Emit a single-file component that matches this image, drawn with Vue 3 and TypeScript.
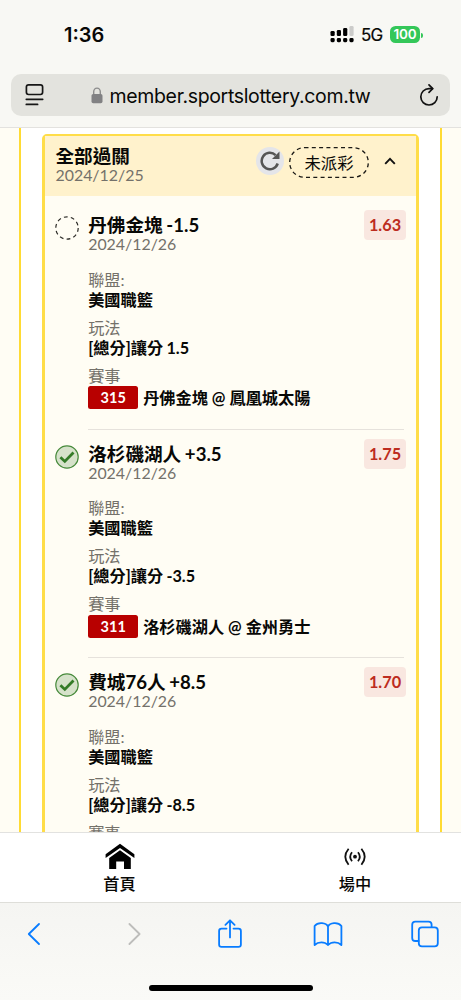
<script setup lang="ts">
interface Leg {
  pick: string
  date: string
  odds: string
  league: string
  play: string
  code: string
  match: string
  won: boolean
}

const legs: Leg[] = [
  { pick: '丹佛金塊 -1.5', date: '2024/12/26', odds: '1.63', league: '美國職籃', play: '[總分]讓分 1.5', code: '315', match: '丹佛金塊 @ 鳳凰城太陽', won: false },
  { pick: '洛杉磯湖人 +3.5', date: '2024/12/26', odds: '1.75', league: '美國職籃', play: '[總分]讓分 -3.5', code: '311', match: '洛杉磯湖人 @ 金州勇士', won: true },
  { pick: '費城76人 +8.5', date: '2024/12/26', odds: '1.70', league: '美國職籃', play: '[總分]讓分 -8.5', code: '', match: '', won: true },
]
</script>

<template>
  <div class="screen">
    <header class="browser">
      <div class="status">
        <span class="time">1:36</span>
        <div class="status-right">
          <svg class="signal" width="24" height="17" viewBox="0 0 24 17">
            <rect x="0.5" y="5" width="4.2" height="5" rx="1.3" />
            <rect x="6.8" y="4" width="4.2" height="6" rx="1.3" />
            <rect x="13.1" y="2" width="4.2" height="8" rx="1.3" />
            <rect x="19.4" y="0" width="4.2" height="10" rx="1.3" fill="#ccccca" />
            <rect x="0.5" y="12" width="4.2" height="4.2" rx="1.4" />
            <rect x="6.8" y="12" width="4.2" height="4.2" rx="1.4" />
            <rect x="13.1" y="12" width="4.2" height="4.2" rx="1.4" />
            <rect x="19.4" y="12" width="4.2" height="4.2" rx="1.4" />
          </svg>
          <span class="net">5G</span>
          <span class="battery">100</span>
          <span class="nub"></span>
        </div>
      </div>
      <div class="address">
        <svg class="reader" width="20" height="24" viewBox="0 0 20 24" fill="none" stroke="#161616" stroke-width="1.7" stroke-linecap="round">
          <rect x="1.4" y="1.9" width="16.2" height="9.6" rx="2.2" />
          <path d="M1.3 16.3H17.7M1.3 21.4H12.6" />
        </svg>
        <div class="url">
          <svg width="12" height="17" viewBox="0 0 12 17">
            <path d="M2.7 8V4.8a3.3 3.7 0 0 1 6.6 0V8" fill="none" stroke="#8c8c8c" stroke-width="1.4" />
            <rect x="0.5" y="7" width="11" height="9.2" rx="1.7" fill="#818183" />
          </svg>
          <span>member.sportslottery.com.tw</span>
        </div>
        <svg class="reload" width="20" height="23" viewBox="0 0 20 23" fill="none" stroke="#111" stroke-width="1.7" stroke-linecap="round" stroke-linejoin="round">
          <path d="M13.5 4.6H10A8.2 8.2 0 1 0 18.2 12.8" />
          <path d="M10 0.9L13.7 4.6L10 8.3" />
        </svg>
      </div>
    </header>

    <main class="content">
      <div class="panel">
        <section class="ticket">
          <div class="ticket-head">
            <div class="head-text">
              <div class="title">全部過關</div>
              <div class="date">2024/12/25</div>
            </div>
            <div class="refresh">
              <svg width="20" height="20" viewBox="0 0 20 20">
                <path d="M15.6 4.1A8.2 8.2 0 1 0 17.7 12.5" fill="none" stroke="#555" stroke-width="2.5" />
                <path d="M19.5 0.6V8.1H12z" fill="#555" />
              </svg>
            </div>
            <div class="pill">
              <svg width="80" height="31" viewBox="0 0 80 31">
                <rect x="0.7" y="0.7" width="78.6" height="29.6" rx="14.8" fill="none" stroke="#1b1a16" stroke-width="1.3" stroke-dasharray="4 3.3" />
              </svg>
              <span>未派彩</span>
            </div>
            <svg class="chevron" width="12" height="8" viewBox="0 0 12 8">
              <path d="M1.2 6.8L6 1.8L10.8 6.8" fill="none" stroke="#111" stroke-width="1.9" />
            </svg>
          </div>

          <div class="legs">
            <article v-for="leg in legs" :key="leg.pick" class="leg">
              <div class="mark">
                <svg v-if="leg.won" width="24" height="24" viewBox="0 0 24 24">
                  <circle cx="12" cy="12" r="11.2" fill="#d6e2ca" stroke="#478a3b" stroke-width="1.2" />
                  <path d="M5.4 12.3L9.8 16.4L18.5 7.6" fill="none" stroke="#347b27" stroke-width="2.8" />
                </svg>
                <svg v-else width="24" height="24" viewBox="0 0 24 24">
                  <circle cx="12" cy="12" r="11.2" fill="none" stroke="#2b2a26" stroke-width="1.2" stroke-dasharray="3.8 3.24" />
                </svg>
              </div>
              <div class="body">
                <div class="title">{{ leg.pick }}</div>
                <div class="date">{{ leg.date }}</div>
                <div class="field first">
                  <div class="label">聯盟:</div>
                  <div class="value">{{ leg.league }}</div>
                </div>
                <div class="field">
                  <div class="label">玩法</div>
                  <div class="value">{{ leg.play }}</div>
                </div>
                <div class="field">
                  <div class="label">賽事</div>
                  <div v-if="leg.code" class="value match">
                    <span class="code">{{ leg.code }}</span>
                    <span>{{ leg.match }}</span>
                  </div>
                </div>
              </div>
              <span class="odds">{{ leg.odds }}</span>
            </article>
          </div>
        </section>
      </div>
    </main>

    <nav class="tabs">
      <div class="tab">
        <svg width="30" height="28" viewBox="0 0 30 28">
          <path d="M15 0.7L29.4 11.2V15L15 4.9L0.6 15V11.2z" />
          <path d="M15 7.3L25.8 15V26H19V18.5H11.2V26H4.2V15z" />
        </svg>
        <span>首頁</span>
      </div>
      <div class="tab">
        <svg width="24" height="28" viewBox="0 0 24 28" fill="none" stroke="#111" stroke-width="1.8">
          <circle cx="12" cy="13.7" r="1.9" fill="#111" stroke="none" />
          <path d="M9 9.2Q5.4 13.7 9 18.2M15 9.2Q18.6 13.7 15 18.2" />
          <path d="M5.6 5.7Q-1 13.7 5.6 21.8M18.4 5.7Q25 13.7 18.4 21.8" />
        </svg>
        <span>場中</span>
      </div>
    </nav>

    <footer class="toolbar">
      <div class="tools">
        <svg width="28" height="30" viewBox="0 0 28 30"><path d="M19 5L8.8 15L19 25" /></svg>
        <svg class="off" width="28" height="30" viewBox="0 0 28 30"><path d="M9.4 5L19.6 15L9.4 25" /></svg>
        <svg width="28" height="30" viewBox="0 0 28 30">
          <path d="M10.5 9.6H5.5Q3.1 9.6 3.1 12V25.4Q3.1 27.8 5.5 27.8H22.5Q24.9 27.8 24.9 25.4V12Q24.9 9.6 22.5 9.6H17.5" />
          <path d="M14 18.4V1.3M9.4 5.8L14 1.3L18.6 5.8" />
        </svg>
        <svg width="30" height="30" viewBox="0 0 30 30">
          <path d="M15 26V7.5C13.2 3.7 5.1 2.6 1.6 7V26C5.2 22.4 11.6 22.4 15 26C18.4 22.4 24.8 22.4 28.4 26V7C24.9 2.6 16.8 3.7 15 7.5" />
        </svg>
        <svg width="28" height="30" viewBox="0 0 28 30">
          <path d="M7.5 22H4.3Q1.2 22 1.2 18.9V5.7Q1.2 2.6 4.3 2.6H17.5Q20.6 2.6 20.6 5.7V8.2" />
          <rect x="7.8" y="8.4" width="19" height="19" rx="3.2" />
        </svg>
      </div>
      <div class="home-bar"></div>
    </footer>
  </div>
</template>

<style>
body {
  margin: 0;
}
</style>

<style scoped>
.screen {
  width: 461px;
  height: 1000px;
  display: flex;
  flex-direction: column;
  overflow: hidden;
  background: #fffdf4;
  color: #080806;
  font-family: Lato, "Noto Sans CJK TC", sans-serif;
}
svg {
  display: block;
  flex: none;
}
.browser {
  flex: none;
  box-sizing: border-box;
  height: 128px;
  background: #f8f8f4;
  border-bottom: 1px solid #e3e2df;
  font-family: Inter, sans-serif;
}
.status {
  display: flex;
  justify-content: space-between;
  align-items: center;
  height: 70px;
  padding: 0 38px 0 64px;
}
.time {
  font-size: 20px;
  font-weight: 600;
}
.status-right {
  display: flex;
  align-items: center;
}
.signal {
  margin-top: -1px;
}
.net {
  margin-left: 7px;
  width: 22px;
  font-size: 17px;
  font-weight: 400;
  letter-spacing: -0.8px;
  -webkit-text-stroke: 0.2px #0c0b08;
}
.battery {
  margin: -1px 0 0 7px;
  width: 30px;
  height: 17px;
  border-radius: 5.5px;
  background: #34c759;
  color: #fff;
  font-size: 13.5px;
  font-weight: 600;
  line-height: 17px;
  text-align: center;
  letter-spacing: -0.2px;
}
.nub {
  width: 2px;
  height: 5px;
  margin-left: 1px;
  border-radius: 0 2px 2px 0;
  background: #34c759;
}
.address {
  display: flex;
  align-items: center;
  justify-content: space-between;
  box-sizing: border-box;
  height: 42px;
  margin: 4px 11px 0;
  padding: 0 11px 0 14px;
  border-radius: 10px;
  background: #e3e3de;
}
.url {
  display: flex;
  align-items: center;
  gap: 7px;
  font-size: 19.5px;
  line-height: 24px;
}
.url span {
  width: 264px;
  padding-top: 1px;
  white-space: nowrap;
  letter-spacing: -0.34px;
}
.content {
  flex: none;
  height: 704px;
  overflow: hidden;
}
.panel {
  box-sizing: border-box;
  height: 720px;
  margin: 0 19px;
  padding: 6px 21px 0;
  border: solid #ffdb33;
  border-width: 0 2px;
  background: #fff;
}
.ticket {
  box-sizing: border-box;
  height: 740px;
  border: 3px solid #ffdd48;
  border-top-width: 2px;
  border-radius: 5px;
  background: #fffdf4;
}
.ticket-head {
  display: flex;
  box-sizing: border-box;
  height: 60px;
  padding: 10px 18px 0 10.5px;
  background: #fff2cc;
}
.head-text {
  width: 200.5px;
}
.title {
  font-size: 18.6px;
  font-weight: 700;
  line-height: 20px;
  white-space: nowrap;
  word-spacing: -0.8px;
}
.date {
  margin-top: -1px;
  font-size: 15.9px;
  line-height: 20px;
  color: #74716a;
}
.refresh {
  display: grid;
  place-items: center;
  width: 28px;
  height: 28px;
  margin-top: 1px;
  border-radius: 50%;
  background: #e4e5e9;
}
.pill {
  display: grid;
  width: 80px;
  height: 31px;
  margin: 1px 0 0 5px;
  font-size: 16.3px;
  line-height: 31px;
  text-align: center;
}
.pill > * {
  grid-area: 1 / 1;
}
.chevron {
  margin: 11px 0 0 15px;
}
.legs {
  padding: 5px 12px 0 10px;
}
.leg {
  display: flex;
  box-sizing: border-box;
  height: 228.7px;
  padding-top: 14px;
}
.mark {
  flex: none;
  width: 33.2px;
  padding-top: 1px;
}
.body {
  flex: 1;
  box-sizing: border-box;
  height: 214.7px;
  border-bottom: 1px solid #e6e2dc;
}
.field {
  margin-top: 8px;
  font-size: 16.2px;
}
.field.first {
  margin-top: 15.5px;
}
.label {
  line-height: 20px;
  color: #74716a;
}
.value {
  line-height: 20px;
  font-weight: 700;
  white-space: nowrap;
  word-spacing: -0.6px;
}
.match {
  display: flex;
  align-items: center;
  gap: 5px;
  margin-top: 0.8px;
  line-height: 23px;
  word-spacing: 0;
}
.code {
  width: 50px;
  height: 23px;
  border-radius: 2.5px;
  background: #b80000;
  color: #fff;
  font-size: 14.5px;
  text-align: center;
}
.odds {
  flex: none;
  width: 42px;
  height: 30px;
  margin: -5px -2px 0 -40px;
  border-radius: 4px;
  background: #f9e7e0;
  color: #bd2c20;
  font-size: 16.3px;
  font-weight: 700;
  line-height: 30px;
  text-align: center;
}
.tabs {
  flex: none;
  display: flex;
  justify-content: space-between;
  box-sizing: border-box;
  height: 71px;
  padding: 10px 66px 0 79.5px;
  border-top: 1px solid #e2e2e0;
  border-bottom: 1px solid #deded9;
  background: #fff;
}
.tab {
  display: flex;
  flex-direction: column;
  align-items: center;
  width: 80px;
  font-size: 16.2px;
  font-weight: 500;
  line-height: 26px;
}
.toolbar {
  flex: 1;
  background: linear-gradient(#f5f5f2, #fafaf7);
}
.tools {
  display: grid;
  grid-template-columns: 99.5px 96.5px 97px 98px 28px;
  padding: 15px 0 0 20px;
}
.tools svg {
  margin-top: 1px;
  fill: none;
  stroke: #087cff;
  stroke-width: 1.8;
  stroke-linecap: round;
  stroke-linejoin: round;
}
.tools .off {
  stroke: #bdbdbb;
}
.home-bar {
  width: 164px;
  height: 6px;
  margin: 36px auto 0;
  border-radius: 3px;
  background: #000;
}
</style>
